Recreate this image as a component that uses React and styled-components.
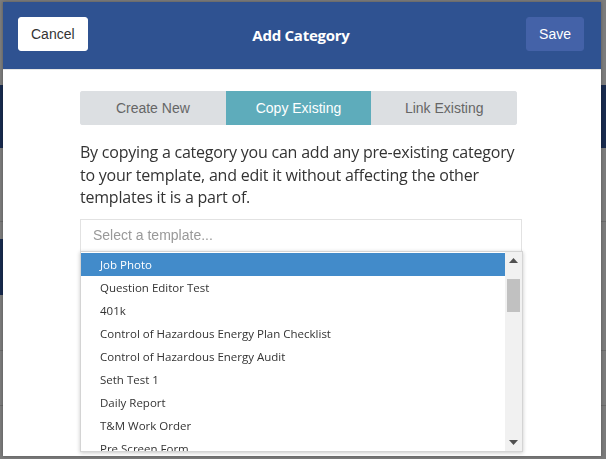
import React from "react";
import styled, { createGlobalStyle } from "styled-components";

const Global = createGlobalStyle`
  html, body { margin: 0; padding: 0; }
  body { width: 606px; height: 459px; overflow: hidden; background: #7b7b7b; font-family: "Liberation Sans", Arial, sans-serif; }
  * { box-sizing: border-box; }
`;

const Page = styled.div`
  width: 606px;
  height: 459px;
  display: flex;
  flex-direction: column;
  background: #7b7b7b;
`;

const PageTop = styled.div`
  height: 85px;
  background: #7c7c7c;
`;

const NavBand = styled.div`
  height: 63px;
  background: #182a4d;
`;

const PageBody = styled.div`
  flex: 1;
  display: flex;
  flex-direction: column;
`;

const PageRow = styled.div`
  height: ${(p) => p.$h}px;
  border-bottom: 1px solid ${(p) => (p.$line ? "#6a6a6a" : "transparent")};
  display: flex;
`;

const SideBlock = styled.div`
  width: 120px;
  background: #182a4d;
`;

const Modal = styled.div`
  position: fixed;
  left: 3px;
  top: 2px;
  width: 598px;
  height: 454px;
  background: #fff;
  display: flex;
  flex-direction: column;
  box-shadow: 0 0 3px rgba(0, 0, 0, 0.3);
`;

const Header = styled.div`
  height: 68px;
  background: #2f5291;
  border-bottom: 1px solid #e6e6e6;
  display: grid;
  grid-template-columns: 1fr auto 1fr;
  align-items: start;
  padding: 15px 17px 0 15px;
`;

const Title = styled.div`
  color: #fff;
  font-family: "Open Sans", sans-serif;
  font-weight: 700;
  font-size: 15px;
  line-height: 37px;
  letter-spacing: -0.25px;
`;

const HeaderButton = styled.button`
  justify-self: ${(p) => (p.$primary ? "end" : "start")};
  font-family: "Liberation Sans", Arial, sans-serif;
  font-size: 14px;
  line-height: 20px;
  padding: 6px 12px;
  border-radius: 3px;
  border: 1px solid ${(p) => (p.$primary ? "#4462a8" : "#fff")};
  background: ${(p) => (p.$primary ? "#4462a8" : "#fff")};
  color: ${(p) => (p.$primary ? "#fff" : "#333")};
  cursor: pointer;
`;

const Body = styled.div`
  flex: 1;
  padding: 21px 79px 0 77px;
  display: flex;
  flex-direction: column;
`;

const Tabs = styled.div`
  width: 437px;
  display: flex;
  border-radius: 3px;
  overflow: hidden;
  background: #dcdfe2;
`;

const Tab = styled.div`
  flex: 1;
  height: 34px;
  display: flex;
  align-items: center;
  justify-content: center;
  font-family: "Liberation Sans", Arial, sans-serif;
  font-size: 14px;
  background: ${(p) => (p.$active ? "#5eacbb" : "#dcdfe2")};
  color: ${(p) => (p.$active ? "#fff" : "#666")};
`;

const Description = styled.p`
  margin: 16px 0 0 0;
  font-family: "Open Sans", sans-serif;
  font-size: 16px;
  line-height: 22.5px;
  letter-spacing: -0.22px;
  color: #333;
`;

const SelectWrap = styled.div`
  position: relative;
  margin-top: 10px;
`;

const Input = styled.div`
  height: 33px;
  border: 1px solid #e2e2e2;
  padding: 0 12px;
  display: flex;
  align-items: center;
  font-family: "Liberation Sans", Arial, sans-serif;
  font-size: 14px;
  color: #999;
`;

const Dropdown = styled.div`
  position: absolute;
  left: 0;
  top: 32px;
  width: 443px;
  height: 201px;
  background: #fff;
  border: 1px solid #d4d4d4;
  box-shadow: 0 1px 4px rgba(0, 0, 0, 0.22);
  display: flex;
  overflow: hidden;
`;

const Options = styled.div`
  flex: 1;
  padding-top: 1px;
  display: flex;
  flex-direction: column;
  overflow: hidden;
`;

const Option = styled.div`
  flex: none;
  height: 23px;
  padding-left: 19px;
  display: flex;
  align-items: center;
  font-family: "Open Sans", sans-serif;
  font-size: 11.5px;
  color: ${(p) => (p.$selected ? "#fff" : "#333")};
  background: ${(p) => (p.$selected ? "#428bca" : "transparent")};
  white-space: nowrap;
`;

const Scrollbar = styled.div`
  width: 17px;
  background: #f1f1f1;
  display: flex;
  flex-direction: column;
  align-items: center;
`;

const Arrow = styled.div`
  height: 17px;
  width: 17px;
  display: flex;
  align-items: center;
  justify-content: center;
`;

const Thumb = styled.div`
  width: 13px;
  height: 33px;
  margin-top: 10px;
  background: #c1c1c1;
`;

const Spacer = styled.div`
  flex: 1;
`;

const items = [
  "Job Photo",
  "Question Editor Test",
  "401k",
  "Control of Hazardous Energy Plan Checklist",
  "Control of Hazardous Energy Audit",
  "Seth Test 1",
  "Daily Report",
  "T&M Work Order",
  "Pre Screen Form",
];

const Tri = ({ up }) => (
  <svg width="9" height="5" viewBox="0 0 9 5">
    <path d={up ? "M0 5 L4.5 0 L9 5 Z" : "M0 0 L4.5 5 L9 0 Z"} fill="#505050" />
  </svg>
);

export default function App() {
  return (
    <>
      <Global />
      <Page>
        <PageTop />
        <NavBand />
        <PageBody>
          <PageRow $h={74} $line />
          <PageRow $h={17} />
          <PageRow $h={57}>
            <SideBlock />
          </PageRow>
          <PageRow $h={55} $line />
          <PageRow $h={55} $line />
        </PageBody>
      </Page>
      <Modal>
        <Header>
          <HeaderButton>Cancel</HeaderButton>
          <Title>Add Category</Title>
          <HeaderButton $primary>Save</HeaderButton>
        </Header>
        <Body>
          <Tabs>
            <Tab>Create New</Tab>
            <Tab $active>Copy Existing</Tab>
            <Tab>Link Existing</Tab>
          </Tabs>
          <Description>
            By copying a category you can add any pre-existing category to your
            template, and edit it without affecting the other templates it is a
            part of.
          </Description>
          <SelectWrap>
            <Input>Select a template...</Input>
            <Dropdown>
              <Options>
                {items.map((it, i) => (
                  <Option key={it} $selected={i === 0}>
                    {it}
                  </Option>
                ))}
              </Options>
              <Scrollbar>
                <Arrow>
                  <Tri up />
                </Arrow>
                <Thumb />
                <Spacer />
                <Arrow>
                  <Tri />
                </Arrow>
              </Scrollbar>
            </Dropdown>
          </SelectWrap>
        </Body>
      </Modal>
    </>
  );
}
